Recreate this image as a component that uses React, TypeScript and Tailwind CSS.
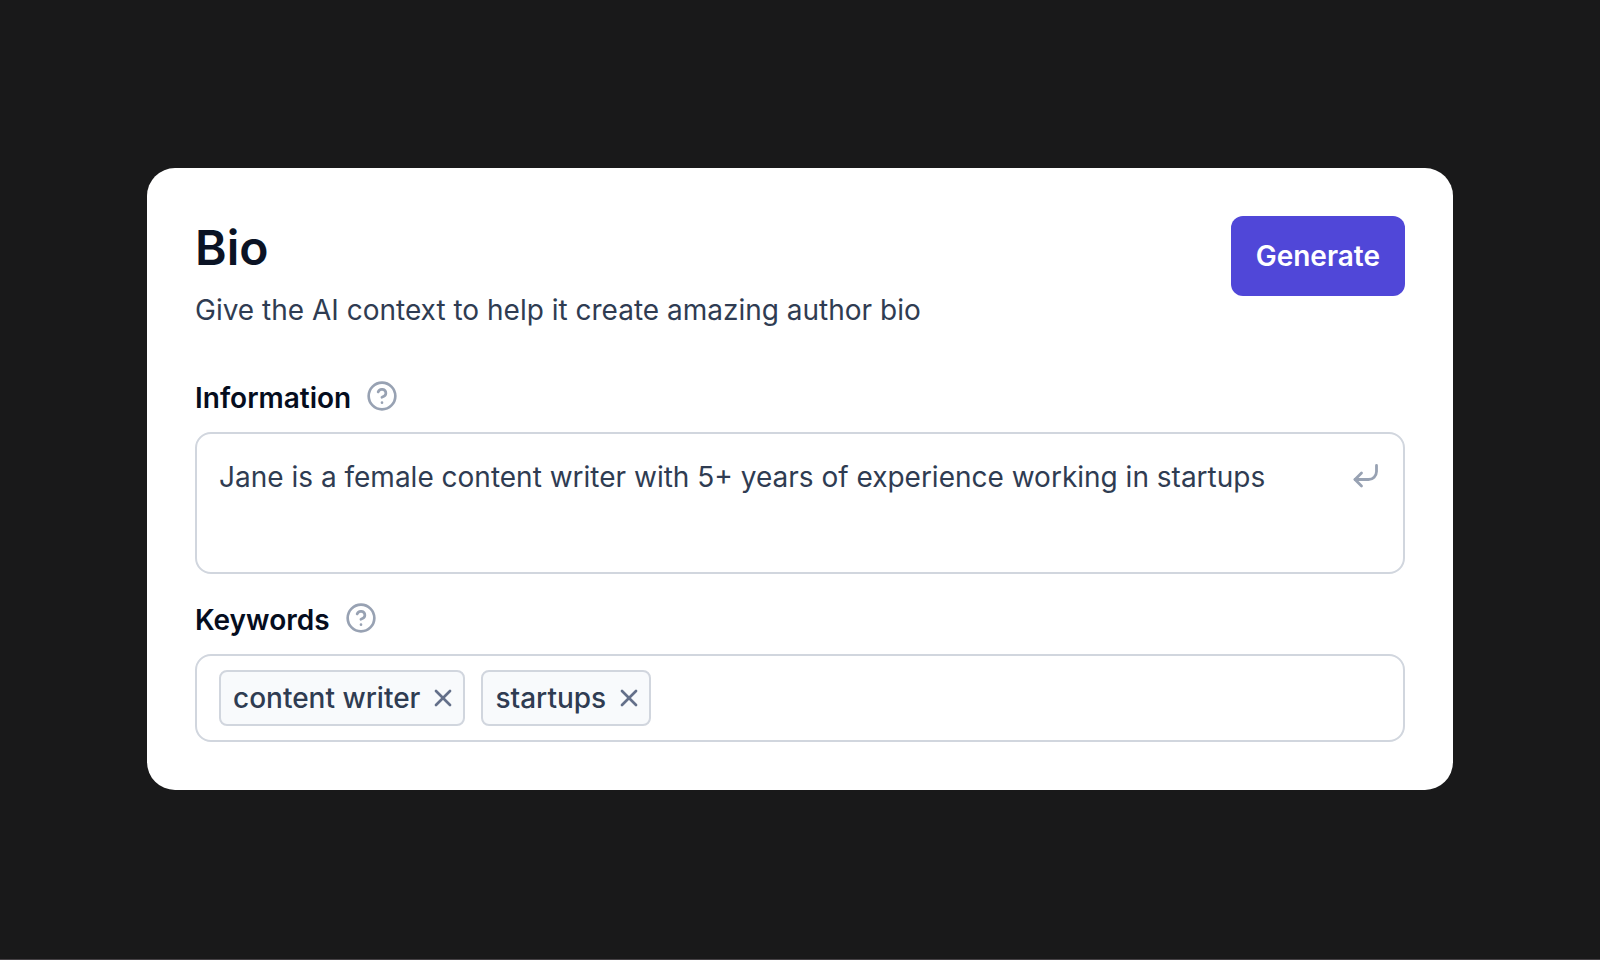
import React, { useState } from 'react';
import { HelpCircle, X } from 'lucide-react';

const Hint: React.FC<{ label: string }> = ({ label }) => (
  <button type="button" aria-label={label} className="text-[#98a2b3]">
    <HelpCircle className="h-8 w-8" strokeWidth={2} />
  </button>
);

const ReturnIcon: React.FC = () => (
  <svg
    className="h-8 w-8"
    viewBox="0 0 32 32"
    fill="none"
    stroke="currentColor"
    strokeWidth="2.8"
    strokeLinecap="round"
    strokeLinejoin="round"
    aria-hidden="true"
  >
    <path d="M27.500 6.500v6a8 8 0 0 1-8 8H6" />
    <path d="m12.500 14-6.500 6.500 6.500 6.500" />
  </svg>
);

const App: React.FC = () => {
  const [information, setInformation] = useState(
    'Jane is a female content writer with 5+ years of experience working in startups'
  );
  const [keywords, setKeywords] = useState(['content writer', 'startups']);

  const removeKeyword = (keyword: string) => {
    setKeywords(keywords.filter((item) => item !== keyword));
  };

  return (
    <div className="min-h-screen flex items-center justify-center bg-[#19191a] border-b border-[#454145] px-9 pb-0.5 font-['Inter',sans-serif] text-[28px] leading-9 text-[#2f3c52]">
      <form className="w-full max-w-[1306px] rounded-[28px] bg-white p-12" onSubmit={(e) => e.preventDefault()}>
        <div className="flex items-start justify-between gap-8">
          <div>
            <h1 className="text-5xl leading-16 font-semibold text-[#0b1324]">Bio</h1>
            <p className="mt-3">Give the AI context to help it create amazing author bio</p>
          </div>
          <button type="submit" className="h-20 rounded-xl bg-[#5047d8] px-[25px] font-semibold text-white">
            Generate
          </button>
        </div>

        <div className="mt-13">
          <div className="flex items-start gap-[15px]">
            <label htmlFor="information" className="font-semibold text-[#050d1e]">
              Information
            </label>
            <Hint label="About information" />
          </div>
          <div className="mt-4 flex items-start gap-4 rounded-2xl border-2 border-[#d1d6de] px-[22px] pt-[25px] pb-[23px]">
            <textarea
              id="information"
              rows={2}
              value={information}
              onChange={(e) => setInformation(e.target.value)}
              className="h-[90px] min-w-0 flex-1 resize-none outline-none"
            />
            <button type="button" aria-label="Submit information" className="text-[#98a2b3]">
              <ReturnIcon />
            </button>
          </div>
        </div>

        <div className="mt-7">
          <div className="flex items-start gap-[15px]">
            <label htmlFor="keywords" className="font-semibold text-[#050d1e]">
              Keywords
            </label>
            <Hint label="About keywords" />
          </div>
          <div className="mt-4 flex flex-wrap items-center gap-4 rounded-2xl border-2 border-[#d1d6de] px-[22px] py-[14px]">
            {keywords.map((keyword) => (
              <span
                key={keyword}
                className="flex h-14 items-center gap-[9px] rounded-lg border-2 border-[#d1d6de] bg-[#f8fafc] pr-1.5 pl-3 font-medium"
              >
                {keyword}
                <button
                  type="button"
                  aria-label={`Remove ${keyword}`}
                  onClick={() => removeKeyword(keyword)}
                  className="text-[#64708a]"
                >
                  <X className="h-7 w-7" strokeWidth={2.3} />
                </button>
              </span>
            ))}
            <input id="keywords" type="text" className="min-w-0 flex-1 outline-none" />
          </div>
        </div>
      </form>
    </div>
  );
};

export default App;
